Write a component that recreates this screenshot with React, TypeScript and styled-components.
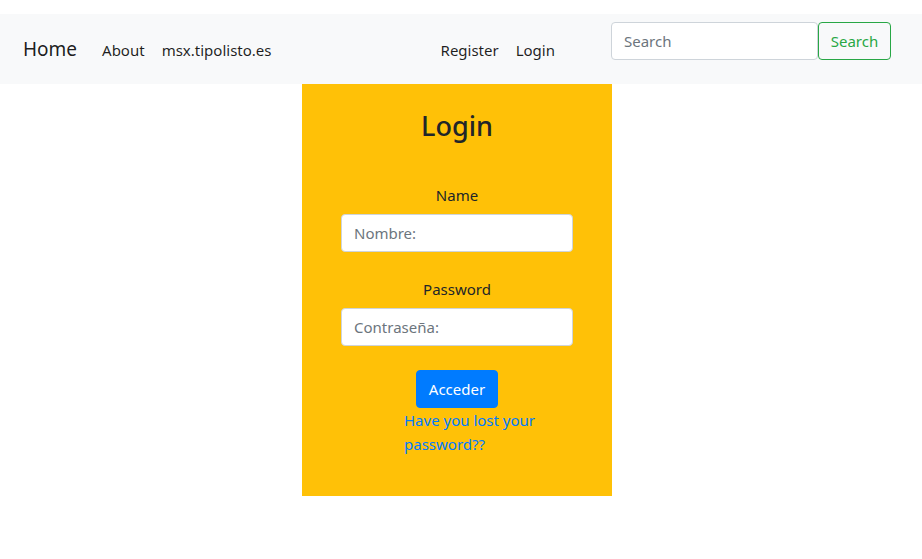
import React from "react";
import styled, { createGlobalStyle } from "styled-components";

const Global = createGlobalStyle`
  html, body { margin: 0; padding: 0; background: #fff; }
  body {
    font-family: "Noto Sans", "Open Sans", sans-serif;
    font-size: 15px;
    line-height: 1.5;
    color: #212529;
  }
  * { box-sizing: border-box; }
`;

const Page = styled.div`
  padding-top: 14px;
`;

const NavBar = styled.nav`
  height: 70px;
  background: #f8f9fa;
  display: flex;
  align-items: center;
  padding: 0 31px 0 23px;
`;

const Brand = styled.a`
  font-size: 19px;
  color: rgba(0, 0, 0, 0.9);
  text-decoration: none;
  margin-right: 25px;
  padding-top: 1px;
`;

const NavList = styled.div`
  display: flex;
  align-items: center;
  gap: 17px;
  padding-top: 2px;
`;

const NavLink = styled.a`
  color: rgba(0, 0, 0, 0.88);
  text-decoration: none;
  font-size: 15px;
`;

const Spacer = styled.div`
  flex: 1;
`;

const SearchForm = styled.form`
  display: flex;
  margin-left: 56px;
  margin-top: -16px;
`;

const SearchInput = styled.input`
  width: 207px;
  height: 38px;
  border: 1px solid #ced4da;
  border-radius: 4px;
  padding: 0 12px;
  font: inherit;
  color: #495057;
  background: #fff;
  &::placeholder { color: #6c757d; }
`;

const SearchButton = styled.button`
  width: 73px;
  height: 38px;
  border: 1px solid #28a745;
  border-radius: 4px;
  background: transparent;
  color: #28a745;
  font: inherit;
  padding: 0;
`;

const Panel = styled.div`
  width: 310px;
  height: 412px;
  margin-left: 302px;
  background: #ffc107;
  display: flex;
  flex-direction: column;
  align-items: center;
  padding-top: 24px;
`;

const Title = styled.h2`
  margin: 0;
  font-size: 27px;
  line-height: 36px;
  font-weight: 500;
  color: #212529;
`;

const Label = styled.label<{ $top: number }>`
  margin-top: ${(p) => p.$top}px;
  line-height: 24px;
  color: #212529;
`;

const Field = styled.input`
  margin-top: 7px;
  width: 232px;
  height: 38px;
  border: 1px solid #ced4da;
  border-radius: 4px;
  padding: 0 12px;
  font: inherit;
  background: #fff;
  &::placeholder { color: #6c757d; }
`;

const SubmitButton = styled.button`
  margin-top: 24px;
  width: 82px;
  height: 38px;
  border: 1px solid #007bff;
  border-radius: 4px;
  background: #007bff;
  color: #fff;
  font: inherit;
  padding: 0;
`;

const LostLink = styled.a`
  align-self: flex-start;
  margin-left: 102px;
  width: 140px;
  line-height: 24px;
  color: #007bff;
  text-decoration: none;
`;

export default function App() {
  return (
    <>
      <Global />
      <Page>
        <NavBar>
          <Brand href="#">Home</Brand>
          <NavList>
            <NavLink href="#">About</NavLink>
            <NavLink href="#">msx.tipolisto.es</NavLink>
          </NavList>
          <Spacer />
          <NavList>
            <NavLink href="#">Register</NavLink>
            <NavLink href="#">Login</NavLink>
          </NavList>
          <SearchForm onSubmit={(e) => e.preventDefault()}>
            <SearchInput placeholder="Search" />
            <SearchButton type="submit">Search</SearchButton>
          </SearchForm>
        </NavBar>
        <Panel>
          <Title>Login</Title>
          <Label $top={39}>Name</Label>
          <Field placeholder="Nombre:" />
          <Label $top={25}>Password</Label>
          <Field type="password" placeholder="Contraseña:" />
          <SubmitButton>Acceder</SubmitButton>
          <LostLink href="#">Have you lost your password??</LostLink>
        </Panel>
      </Page>
    </>
  );
}
